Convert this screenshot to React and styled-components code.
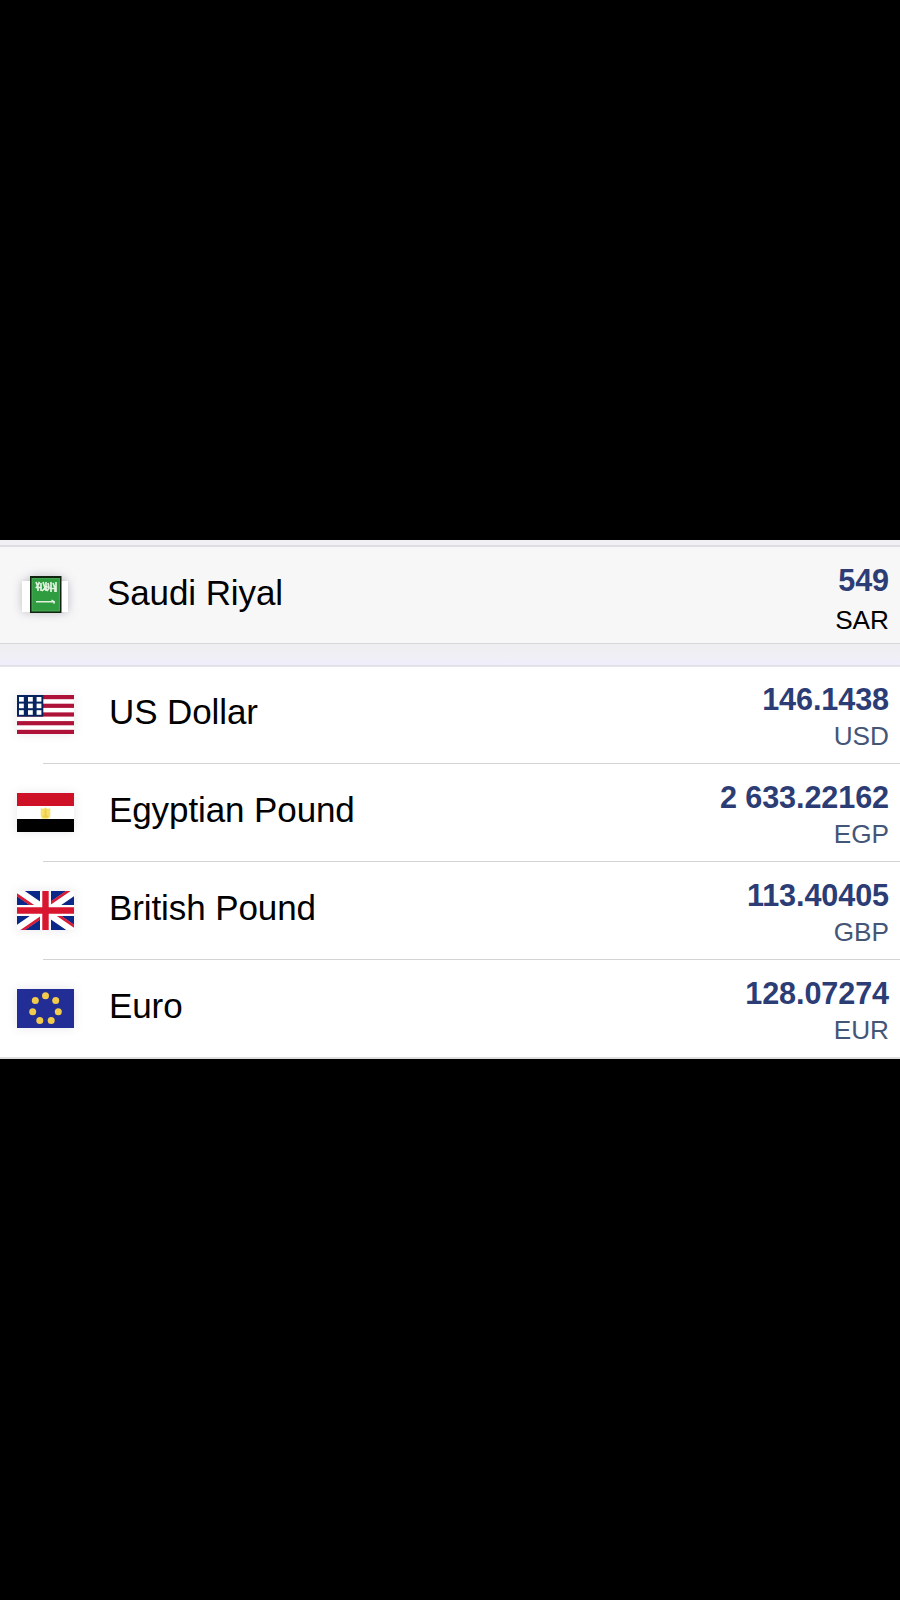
import React from 'react';
import styled, { createGlobalStyle } from 'styled-components';

const GlobalStyle = createGlobalStyle`
  * {
    box-sizing: border-box;
  }

  body {
    margin: 0;
    background: #000;
    font-family: 'Liberation Sans', Arial, sans-serif;
  }
`;

const Screen = styled.main`
  display: flex;
  flex-direction: column;
  justify-content: flex-start;
  width: 900px;
  height: 1600px;
  padding-top: 540px;
  background: #000;
  overflow: hidden;
`;

const TopStrip = styled.div`
  flex: none;
  height: 7px;
  background: #f0f0f5;
  border-bottom: 2px solid #dedee2;
`;

const Gap = styled.div`
  flex: none;
  height: 23px;
  background: linear-gradient(#efeff2 0%, #efeff4 50%, #efeefb 100%);
  border-top: 1px solid #d6d6da;
  border-bottom: 1px solid #e2e1e8;
`;

const List = styled.ul`
  flex: none;
  margin: 0;
  padding: 0;
  list-style: none;
  background: #fff;
  box-shadow: inset 0 1px 0 #e4e3e8;
`;

const Row = styled.li`
  display: flex;
  align-items: flex-start;
  height: 98px;
  padding-right: 11px;
  background: linear-gradient(#d4d4d6, #d4d4d6) 43px 100% / 857px 1px no-repeat;

  &:last-child {
    background: linear-gradient(#dededf, #dededf) 0 100% / 100% 2px no-repeat;
    height: 99px;
  }
`;

const BaseRow = styled.div`
  display: flex;
  flex: none;
  align-items: flex-start;
  height: 96px;
  padding-right: 11px;
  background: #f7f7f8;
`;

const FlagCell = styled.div`
  flex: none;
  width: 107px;
  padding: 29px 0 0 17px;

  svg {
    display: block;
    filter: drop-shadow(0 0 5px rgba(60, 50, 80, ${props => (props.$base ? 0.3 : 0.12)}));
  }
`;

const Name = styled.span`
  flex: 1;
  padding-top: 26px;
  margin-left: ${props => (props.$base ? '0' : '2px')};
  font-size: 35px;
  line-height: 40px;
  letter-spacing: -0.1px;
  color: #000;
`;

const Value = styled.div`
  display: flex;
  flex-direction: column;
  align-items: flex-end;
  padding-top: 15px;
`;

const Amount = styled.span`
  font-size: 30.6px;
  font-weight: 700;
  line-height: 36px;
  letter-spacing: -0.1px;
  color: #2c3c75;
  white-space: nowrap;
`;

const Code = styled.span`
  margin-top: ${props => (props.$base ? '4px' : '1px')};
  font-size: 26.2px;
  line-height: 36px;
  color: ${props => (props.$base ? '#000' : '#445677')};
`;

function SaudiFlag() {
  return (
    <svg width="57" height="39" viewBox="0 0 57 39">
      <rect x="5" y="5" width="46" height="31" fill="#fff" />
      <rect x="13" y="0" width="31.5" height="37" fill="#10240f" />
      <rect x="14.5" y="2" width="28.5" height="33.5" fill="#45a653" />
      <rect x="15.8" y="3.2" width="26" height="31" fill="#2f9c40" />
      <g fill="none" stroke="#dff2de" strokeWidth="1.7">
        <path d="M19 6l2 5v4M22.5 6l-3 6M24 7v8M26 6l2 6-3 3M29 6v9M31 7l1 5-2 3M34 6v10M36 7l2 5v4M39 6v10" />
        <path d="M18.5 11.5h6M27 11h5M33 12.5h6" />
        <path d="M19 25.7h19M34.5 24l2.5 1.7v2" strokeWidth="1.4" />
      </g>
    </svg>
  );
}

function UsFlag() {
  return (
    <svg width="57" height="39" viewBox="0 0 57 39">
      <rect width="57" height="39" fill="#fff" />
      {[0, 1, 2, 3, 4].map(i => (
        <rect key={i} y={i * 8.7} width="57" height="4.2" fill="#af1238" />
      ))}
      <rect width="26.3" height="21.6" fill="#06245f" />
      {[2, 11, 19.6].map(x =>
        [2, 8.6, 15.2].map(y => (
          <rect key={`${x}-${y}`} x={x} y={y} width="4.8" height="4.6" fill="#fff" />
        ))
      )}
    </svg>
  );
}

function EgyptFlag() {
  return (
    <svg width="57" height="39" viewBox="0 0 57 39">
      <rect width="57" height="39" fill="#fff" />
      <rect width="57" height="13" fill="#ce1126" />
      <rect y="26" width="57" height="13" fill="#000" />
      <path
        d="M23.7 15.2l2.8.8 2-1.8 2 1.8 2.8-.8v8l-1 2-2.2.6h-3.2l-2.2-.6-1-2z"
        fill="#f6e06c"
      />
      <path d="M28.5 16.5v6M26.3 23.5h4.6" stroke="#edcb45" strokeWidth="1.8" />
    </svg>
  );
}

function UkFlag() {
  return (
    <svg width="57" height="39" viewBox="0 0 57 39">
      <rect width="57" height="39" fill="#092887" />
      <path d="M0 0l57 39M57 0L0 39" stroke="#fff" strokeWidth="8.8" />
      <path
        d="M0 2.3L28.5 21.8v3.3L0 5.6zM57-5.6L28.5 13.9v3.3L57-2.3zM28.5 13.9L57 33.4v3.3L28.5 17.2zM28.5 21.8L0 41.3v3.3l28.5-19.5z"
        fill="#d81c38"
      />
      <path d="M28.5 0v39M0 19.5h57" stroke="#fff" strokeWidth="11" />
      <path d="M28.5 0v39M0 19.5h57" stroke="#d81630" strokeWidth="6.4" />
    </svg>
  );
}

const stars = [
  [28.5, 6.8],
  [38.7, 11.6],
  [41.3, 22.7],
  [34.2, 31.6],
  [22.8, 31.6],
  [15.7, 22.7],
  [18.3, 11.6],
];

function EuFlag() {
  return (
    <svg width="57" height="39" viewBox="0 0 57 39">
      <rect width="57" height="39" fill="#222d95" />
      {stars.map(([cx, cy]) => (
        <circle key={`${cx}-${cy}`} cx={cx} cy={cy} r="3.5" fill="#f2cb4c" />
      ))}
    </svg>
  );
}

const rates = [
  { name: 'US Dollar', amount: '146.1438', code: 'USD', Flag: UsFlag },
  { name: 'Egyptian Pound', amount: '2 633.22162', code: 'EGP', Flag: EgyptFlag },
  { name: 'British Pound', amount: '113.40405', code: 'GBP', Flag: UkFlag },
  { name: 'Euro', amount: '128.07274', code: 'EUR', Flag: EuFlag },
];

function Rate({ rate }) {
  const { name, amount, code, Flag } = rate;
  return (
    <Row>
      <FlagCell>
        <Flag />
      </FlagCell>
      <Name>{name}</Name>
      <Value>
        <Amount>{amount}</Amount>
        <Code>{code}</Code>
      </Value>
    </Row>
  );
}

export default function App() {
  return (
    <>
      <GlobalStyle />
      <Screen>
        <TopStrip />
        <BaseRow>
          <FlagCell $base>
            <SaudiFlag />
          </FlagCell>
          <Name $base>Saudi Riyal</Name>
          <Value>
            <Amount>549</Amount>
            <Code $base>SAR</Code>
          </Value>
        </BaseRow>
        <Gap />
        <List>
          {rates.map(rate => (
            <Rate key={rate.code} rate={rate} />
          ))}
        </List>
      </Screen>
    </>
  );
}
